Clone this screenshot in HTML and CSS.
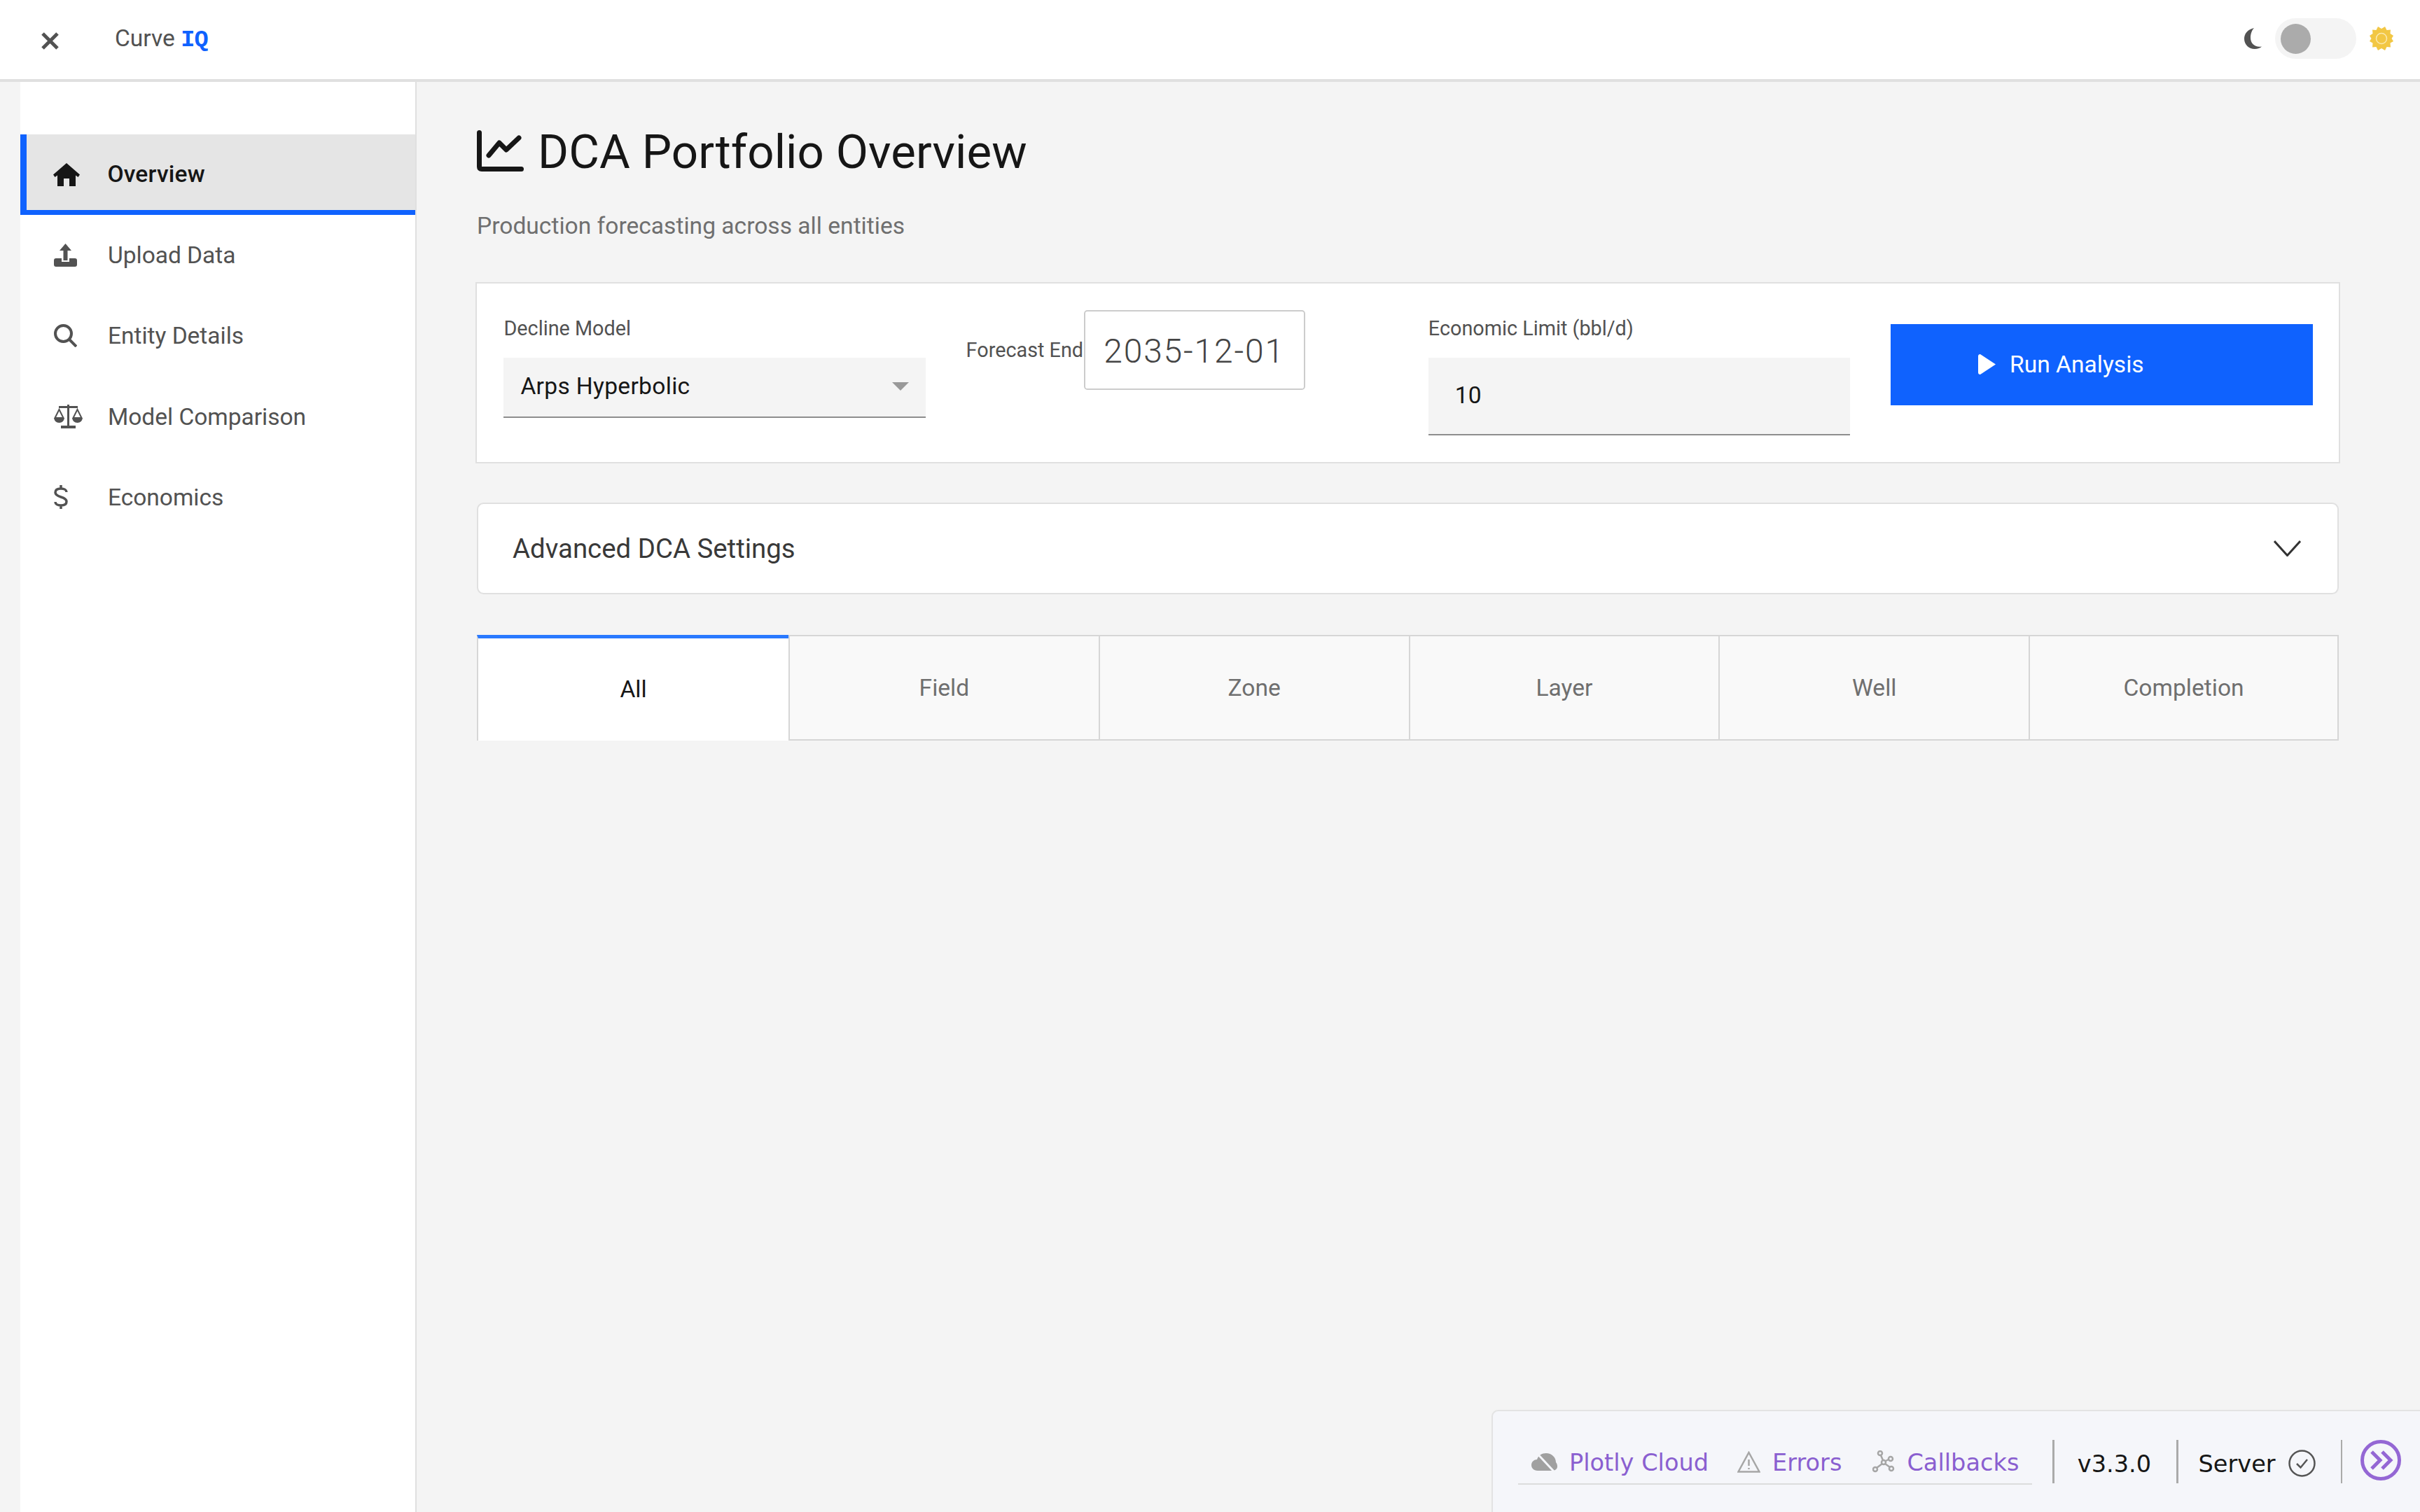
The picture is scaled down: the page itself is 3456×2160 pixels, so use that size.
FILE: index.html
```html
<!DOCTYPE html>
<html lang="en">
<head>
<meta charset="utf-8">
<title>Curve IQ</title>
<link rel="stylesheet" href="styles.css">
</head>
<body>
<header class="topbar">
  <svg class="close-icon" viewBox="0 0 25 25"><path d="M2 2L23 23M23 2L2 23"/></svg>
  <div class="brand">Curve <span class="brand-iq">IQ</span></div>
  <div class="theme-toggle">
    <svg class="moon" viewBox="0 0 25 30"><path d="M14 0C5 2 0 8 0 15.500C0 24 7 30 15 30C19 30 23 28.500 25 26.500C15 28 9 22 9 14C9 8 11 3 14 0Z"/></svg>
    <div class="track"><div class="knob"></div></div>
    <svg class="sun" viewBox="0 0 34 34"><path d="M12 0L17 3L22 0L24.500 5L30 4.500L29.500 10L34 13L31.500 17L34 21L29.500 23.500L30 29.500L24.500 29L22 34L17 31L12 34L9.500 29L4 29.500L4.500 23.500L0 21L2.500 17L0 13L4.500 10L4 4.500L9.500 5Z"/><circle class="sun-core" cx="17" cy="17" r="7.500"/></svg>
  </div>
</header>
<div class="shell">
  <nav class="sidebar">
    <a class="nav-item nav-active"><span class="nav-icon"><svg class="ic-home" viewBox="0 0 38 33"><path d="M19 0L38 16.500L35.500 20L32 17.500V33H23V22H15V33H6V17.500L2.500 20L0 16.500Z"/></svg></span>Overview</a>
    <a class="nav-item"><span class="nav-icon"><svg class="ic-upload" viewBox="0 0 33 33"><path d="M16.500 0L25 10H19.500V24H13.500V10H8Z"/><path d="M3 21H11V26H22V21H30Q33 21 33 24V30Q33 33 30 33H3Q0 33 0 30V24Q0 21 3 21Z"/></svg></span>Upload Data</a>
    <a class="nav-item"><span class="nav-icon"><svg class="ic-search" viewBox="0 0 33 33"><circle cx="13.500" cy="13.500" r="11.500"/><path d="M22 22L32 32"/></svg></span>Entity Details</a>
    <a class="nav-item"><span class="nav-icon"><svg class="ic-scale" viewBox="0 0 41 34"><path class="sc-fill" d="M7 2H19V0H22V2H34V5H22V30H31V34H10V30H19V5H7Z"/><path class="sc-line" d="M7.500 7L1.500 19H13.500ZM33.500 7L27.500 19H39.500Z"/><path class="sc-fill" d="M0 19H15Q14 26 7.500 26Q1 26 0 19ZM26 19H41Q40 26 33.500 26Q27 26 26 19Z"/></svg></span>Model Comparison</a>
    <a class="nav-item"><span class="nav-icon"><svg class="ic-dollar" viewBox="0 0 20 34"><path d="M18 10C18 7 15 5 10 5C5 5 2 7 2 10.500C2 14 5 15.500 10 17C15 18.500 18 20 18 23.500C18 27 15 29 10 29C5 29 2 27 2 24M10 0V5M10 29V34"/></svg></span>Economics</a>
  </nav>
  <main class="content">
    <h1 class="page-title"><svg class="ic-chart" viewBox="0 0 67 59"><path d="M3.500 3.500V52Q3.500 55.500 7 55.500H63.500"/><path d="M17 36L32 18L42 28L60 11"/></svg><span class="title-text">DCA Portfolio Overview</span></h1>
    <p class="subtitle">Production forecasting across all entities</p>
    <section class="controls">
      <div class="field">
        <label class="field-label">Decline Model</label>
        <div class="select"><span class="select-value">Arps Hyperbolic</span><span class="caret"></span></div>
      </div>
      <div class="field-inline">
        <label class="inline-label">Forecast End</label>
        <div class="date-input">2035-12-01</div>
      </div>
      <div class="field">
        <label class="field-label">Economic Limit (bbl/d)</label>
        <div class="number-input">10</div>
      </div>
      <button class="run-btn"><svg class="ic-play" viewBox="0 0 25 29"><path d="M3 0L25 14.500L3 29Q0 29 0 26V3Q0 0 3 0Z"/></svg>Run Analysis</button>
    </section>
    <section class="accordion">
      <span>Advanced DCA Settings</span>
      <svg class="ic-chevron" viewBox="0 0 39 23"><path d="M1 1L19.500 21.500L38 1"/></svg>
    </section>
    <div class="tabs">
      <div class="tab tab-active">All</div>
      <div class="tab">Field</div>
      <div class="tab">Zone</div>
      <div class="tab">Layer</div>
      <div class="tab">Well</div>
      <div class="tab tab-last">Completion</div>
    </div>
  </main>
</div>
<footer class="devtools">
  <div class="dev-group">
    <span class="dev-item"><svg class="ic-cloud" viewBox="0 0 37 32"><path class="cloud-body" d="M9 29C3 29 0 25 0 21C0 16 4 13 8 13C10 7 15 4 21 4C29 4 35 10 35 17C37 19 37 22 37 23C37 27 33 29 30 29Z"/><path class="cloud-slash" d="M5 1L33 31"/></svg>Plotly Cloud</span>
    <span class="dev-item dev-errors"><svg class="ic-warn" viewBox="0 0 33 31"><path d="M16.500 2L31.500 29.500H1.500Z"/><path d="M16.500 12V21M16.500 24V26"/></svg>Errors</span>
    <span class="dev-item dev-callbacks"><svg class="ic-graph" viewBox="0 0 32 32"><circle cx="11" cy="4" r="3"/><circle cx="26" cy="12" r="3"/><circle cx="16" cy="17" r="3"/><circle cx="4" cy="27" r="3"/><circle cx="27" cy="26" r="3"/><path d="M12 7L15 14M19 15L23 13M14 19L6 25M18 19L25 24"/></svg>Callbacks</span>
  </div>
  <div class="dev-divider dev-divider-first"></div>
  <span class="dev-version">v3.3.0</span>
  <div class="dev-divider"></div>
  <span class="dev-server">Server<svg class="ic-check" viewBox="0 0 39 39"><circle cx="19.500" cy="19.500" r="18"/><path d="M12 20L17.500 25.500L27 14"/></svg></span>
  <div class="dev-divider"></div>
  <svg class="ic-expand" viewBox="0 0 58 58"><circle cx="29" cy="29" r="26.500"/><path d="M16 17L28 29L16 41M31 17L43 29L31 41"/></svg>
</footer>
</body>
</html>
```
FILE: styles.css
```css
* { box-sizing: border-box; }
html, body { margin: 0; height: 100%; }
body {
  background: #f4f4f4;
  color: #161616;
  font-family: Roboto, "Liberation Sans", sans-serif;
  font-size: 33.6px;
  overflow: hidden;
}
svg { display: block; flex: none; }

/* top bar */
.topbar {
  height: 117px;
  background: #fff;
  border-bottom: 4px solid #e0e0e0;
  display: flex;
  align-items: center;
  padding-left: 59px;
}
.close-icon { width: 25px; height: 25px; fill: none; stroke: #525252; stroke-width: 5px; margin-top: 4px; }
.brand { margin-left: 80px; color: #525252; font-size: 33.6px; margin-top: -3px; }
.brand-iq { color: #0f62fe; font-family: "Liberation Mono", monospace; font-weight: 700; letter-spacing: -1px; }
.theme-toggle { margin-left: auto; display: flex; align-items: center; margin-right: 38px; margin-top: -3px; }
.moon { width: 25px; height: 30px; fill: #525252; }
.track { width: 116px; height: 58px; border-radius: 29px; background: #f4f4f4; margin-left: 19px; padding: 8px; }
.knob { width: 43px; height: 43px; border-radius: 50%; background: #ababab; }
.sun { width: 34px; height: 34px; margin-left: 19px; fill: #f2c744; }
.sun-core { fill: #f2c744; stroke: #fbe9b0; stroke-width: 1.500px; }

/* shell */
.shell { display: flex; height: calc(100% - 117px); }
.sidebar {
  width: 566px;
  margin-left: 29px;
  background: #fff;
  border-right: 2.4px solid #e0e0e0;
  padding-top: 75px;
  flex: none;
}
.nav-item {
  display: flex;
  align-items: center;
  height: 115.2px;
  padding-left: 48px;
  color: #525252;
  letter-spacing: -.05px;
}
.nav-active {
  background: #e5e5e5;
  color: #161616;
  font-weight: 500;
  letter-spacing: .2px;
  border-left: 9.6px solid #0f62fe;
  border-bottom: 7px solid #0f62fe;
  padding: 4px 0 0 38.4px;
}
.nav-icon { width: 77px; flex: none; display: flex; }
.ic-home { width: 38px; height: 33px; fill: #161616; margin-top: 3px; }
.ic-upload { width: 33px; height: 33px; fill: #525252; }
.ic-search { width: 33px; height: 33px; fill: none; stroke: #525252; stroke-width: 4px; }
.ic-scale { width: 41px; height: 34px; }
.sc-fill { fill: #525252; }
.sc-line { fill: none; stroke: #525252; stroke-width: 2px; }
.ic-dollar { width: 20px; height: 34px; fill: none; stroke: #525252; stroke-width: 3.500px; }

/* main */
.content { flex: 1; padding: 68px 116px 0 86px; min-width: 0; }
.page-title {
  margin: 0;
  height: 60px;
  display: flex;
  align-items: center;
  gap: 20px;
  font-size: 67.2px;
  font-weight: 400;
  color: #161616;
}
.title-text { padding-top: 4px; letter-spacing: .1px; }
.ic-chart { width: 67px; height: 59px; fill: none; stroke: #161616; stroke-width: 7px; stroke-linecap: round; stroke-linejoin: round; }
.subtitle { margin: 58px 0 0; line-height: 40px; color: #6f6f6f; }

.controls {
  margin: 60px -2px 0 -2px;
  height: 259px;
  background: #fff;
  border: 2.4px solid #e0e0e0;
  padding: 38.4px 37.4px 38.4px 38.4px;
  display: grid;
  grid-template-columns: repeat(4, 1fr);
  column-gap: 57.6px;
  align-items: start;
}
.field-label { display: block; height: 52px; line-height: 52px; margin-bottom: 16px; font-size: 28.8px; color: #525252; }
.select {
  height: 86px;
  background: #f4f4f4;
  border-bottom: 2.4px solid #8d8d8d;
  display: flex;
  align-items: center;
  justify-content: space-between;
  padding: 0 24px;
  font-size: 33.6px;
}
.select-value { letter-spacing: .3px; margin-top: -3px; }
.caret { width: 0; height: 0; border-left: 12px solid transparent; border-right: 12px solid transparent; border-top: 12px solid #999; margin-top: -2px; }
.number-input {
  height: 111px;
  background: #f4f4f4;
  border-bottom: 2.4px solid #8d8d8d;
  display: flex;
  align-items: center;
  padding: 0 38px 3px;
}
.field-inline { display: flex; align-items: center; }
.inline-label { font-size: 28.8px; color: #525252; width: 168px; flex: none; white-space: nowrap; }
.date-input {
  width: 316px;
  height: 114px;
  border: 2.4px solid #ccc;
  border-radius: 4.800px;
  display: flex;
  align-items: center;
  justify-content: center;
  padding-top: 2px;
  font-size: 48px;
  font-weight: 300;
  color: #444;
  letter-spacing: 1.800px;
}
.run-btn {
  margin-top: 19.200px;
  height: 116px;
  width: 100%;
  border: 0;
  background: #0f62fe;
  color: #fff;
  font: inherit;
  display: flex;
  align-items: center;
  justify-content: center;
  gap: 20px;
  padding: 0 116px 0 0;
}
.ic-play { width: 25px; height: 29px; fill: #fff; }

.accordion {
  margin-top: 56px;
  height: 131px;
  background: #fff;
  border: 2.4px solid #e0e0e0;
  border-radius: 9.600px;
  display: flex;
  align-items: center;
  justify-content: space-between;
  padding: 0 52px 0 49px;
  font-size: 38.4px;
  color: #393939;
}
.ic-chevron { width: 39px; height: 23px; fill: none; stroke: #333; stroke-width: 3px; }

.tabs { margin-top: 58px; height: 151px; display: grid; grid-template-columns: 445px repeat(5, 1fr); }
.tab {
  display: flex;
  align-items: center;
  justify-content: center;
  background: #f9f9f9;
  color: #6f6f6f;
  border-top: 2.4px solid #d6d6d6;
  border-bottom: 2.4px solid #d6d6d6;
  border-left: 2.4px solid #d6d6d6;
}
.tab-last { border-right: 2.4px solid #d6d6d6; }
.tab-active {
  background: #fff;
  color: #161616;
  border-top: 5px solid #2979ff;
  border-bottom: 0;
  padding-bottom: 2px;
}

/* floating dev tools */
.devtools {
  position: fixed;
  right: 0;
  bottom: 0;
  width: 1326px;
  height: 146px;
  background: #f5f6fa;
  border: 2.4px solid #e3e3e3;
  border-width: 2.4px 0 0 2.4px;
  border-top-left-radius: 9.600px;
  display: flex;
  align-items: flex-start;
  padding: 41px 0 0 36px;
  font-family: "DejaVu Sans", Verdana, sans-serif;
  font-size: 33.6px;
  line-height: 62px;
  color: #161616;
}
.dev-group {
  display: flex;
  align-items: center;
  height: 64px;
  border-bottom: 2.4px solid #dcdcdc;
  padding: 0 19px;
  color: #8a5fd0;
}
.dev-item { display: flex; align-items: center; gap: 17px; white-space: nowrap; padding-top: 4px; }
.dev-item svg { margin-top: -4px; }
.dev-errors { margin-left: 41px; }
.dev-callbacks { margin-left: 44px; }
.ic-cloud { width: 37px; height: 32px; }
.cloud-body { fill: #a0a0a0; }
.cloud-slash { fill: none; stroke: #f5f6fa; stroke-width: 3px; }
.ic-warn { width: 33px; height: 31px; fill: none; stroke: #a6a6a6; stroke-width: 2.500px; }
.ic-graph { width: 32px; height: 32px; fill: none; stroke: #a6a6a6; stroke-width: 2.500px; }
.dev-divider { width: 2.4px; height: 62px; background: #aaa; flex: none; }
.dev-divider-first { margin-left: 29px; }
.dev-version { padding: 4px 36px 0 33px; }
.dev-server { display: flex; align-items: center; gap: 18px; padding: 4px 36px 0 29px; }
.ic-check { width: 39px; height: 39px; margin-top: -4px; fill: none; stroke: #555; stroke-width: 2.500px; }
.ic-expand { width: 58px; height: 58px; margin-left: 26px; fill: none; stroke: #9467d4; stroke-width: 5px; }
```
